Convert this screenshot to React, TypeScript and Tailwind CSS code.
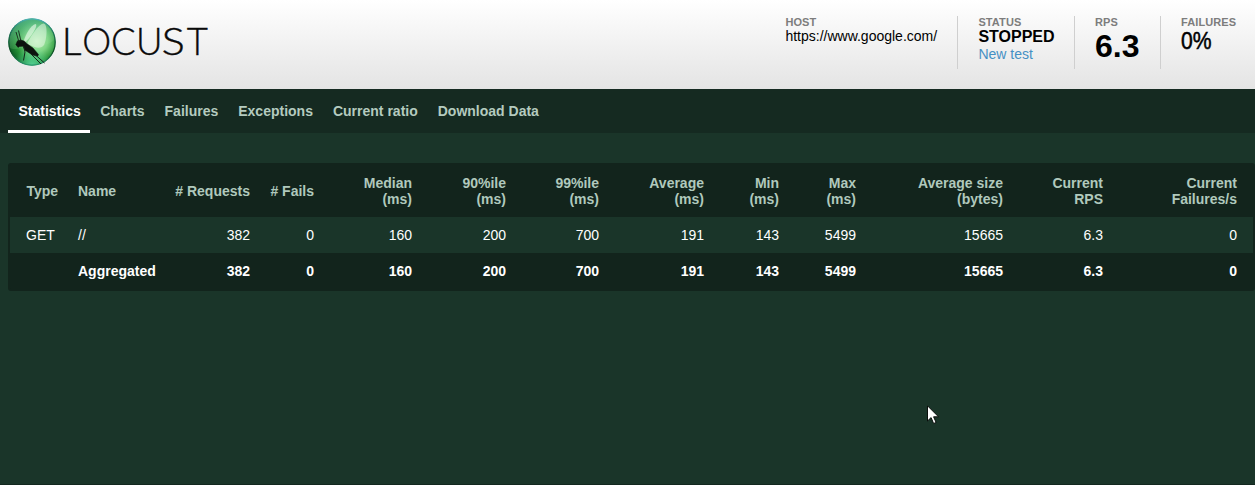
import React from "react";

const tabs = ["Charts", "Failures", "Exceptions", "Current ratio", "Download Data"];

const columns = [
  { lines: ["Type"], width: 58 },
  { lines: ["Name"], width: 97 },
  { lines: ["# Requests"], width: 95 },
  { lines: ["# Fails"], width: 64 },
  { lines: ["Median", "(ms)"], width: 98 },
  { lines: ["90%ile", "(ms)"], width: 94 },
  { lines: ["99%ile", "(ms)"], width: 93 },
  { lines: ["Average", "(ms)"], width: 105 },
  { lines: ["Min", "(ms)"], width: 75 },
  { lines: ["Max", "(ms)"], width: 77 },
  { lines: ["Average size", "(bytes)"], width: 147 },
  { lines: ["Current", "RPS"], width: 100 },
  { lines: ["Current", "Failures/s"], width: 140 },
];

const numbers = ["382", "0", "160", "200", "700", "191", "143", "5499", "15665", "6.3", "0"];

function cellClass(i: number) {
  if (i === 0) return "pl-4 text-left";
  if (i === 1) return "pl-[10px] text-left";
  if (i === columns.length - 1) return "pr-4 text-right";
  return "pr-[10px] text-right";
}

function Logo() {
  return (
    <svg width="212" height="64" viewBox="0 0 212 64" role="img" aria-label="Locust">
      <defs>
        <radialGradient id="orb" cx="0.6" cy="0.48" r="0.58">
          <stop offset="0" stopColor="#b9efb4" />
          <stop offset="0.4" stopColor="#7ed584" />
          <stop offset="0.75" stopColor="#279338" />
          <stop offset="1" stopColor="#0f6426" />
        </radialGradient>
        <linearGradient id="rim" x1="0" y1="0" x2="0" y2="1">
          <stop offset="0" stopColor="#4cb3b5" />
          <stop offset="0.3" stopColor="#1d7358" />
          <stop offset="0.7" stopColor="#0c4a20" />
          <stop offset="1" stopColor="#2a9a70" />
        </linearGradient>
        <radialGradient id="glow" cx="0.5" cy="1" r="0.4">
          <stop offset="0" stopColor="#5fe0a8" stopOpacity="0.85" />
          <stop offset="1" stopColor="#5fe0a8" stopOpacity="0" />
        </radialGradient>
        <linearGradient id="gloss" x1="0" y1="0" x2="0.3" y2="1">
          <stop offset="0" stopColor="#62c9b8" stopOpacity="0.65" />
          <stop offset="1" stopColor="#a5e8a5" stopOpacity="0.12" />
        </linearGradient>
      </defs>
      <circle cx="32" cy="32" r="23.6" fill="url(#orb)" />
      <path d="M9 32C10 18 20 9 32 9c12 0 22 8 23 20-9 10-23 5-31 8-6 2-11 3-14 1z" fill="url(#gloss)" />
      <circle cx="32" cy="32" r="23.4" fill="url(#glow)" />
      <circle cx="32" cy="32" r="23.2" fill="none" stroke="url(#rim)" strokeWidth="1.2" />
      <path d="M23.500 32C25 25 31 15 35.500 14c2.500.2-1 9-10.500 18.500z" fill="#f0fbee" fillOpacity="0.6" />
      <path d="M27 34C31 26 38 14.500 43.500 13.500c4.500.5 3.500 15 .8 21-2.500 4.500-9 3.500-13.300 1z" fill="#f0fbee" fillOpacity="0.5" />
      <path d="M15.800 34.600l1.700-3.800 3.500-.8 3.500 1.200 2.500 2.600 6 4.200 5.500 6.500-.8 1.800-5.200-1.200-7.500-4.900-2-4-3.500.2-1.500 1z" fill="#0c130e" stroke="#0c130e" strokeWidth="0.5" />
      <path d="M19 32L16 22M21 31.500L18.500 20.500" fill="none" stroke="#14251a" strokeWidth="0.9" />
      <path d="M23.500 36l1.500 6-1.500 8.500M30 43l11 11M35 44.500l9.500 8.500" fill="none" stroke="#14251a" strokeWidth="1" />
      <g
        fontFamily="Lato, sans-serif"
        fontSize="36.500"
        fontWeight="300"
        fill="#0a0a0a"
        stroke="#0a0a0a"
        strokeWidth="0.35"
      >
        <text transform="translate(61.800 45) scale(1.07 1)">L</text>
        <text x="82.300 111 136" y="45">OCU</text>
        <text transform="translate(161.500 45) scale(1.2 1)">S</text>
        <text x="186.700" y="45">T</text>
      </g>
    </svg>
  );
}

function Stat({ label, children, className }: { label: string; children: React.ReactNode; className: string }) {
  return (
    <div className={`h-[53px] shrink-0 border-[#cfcfcf] ${className}`}>
      <div className="h-[11px] text-[11px] leading-[13px] font-bold tracking-[0.1px] text-[#7d7d7d]">{label}</div>
      {children}
    </div>
  );
}

export default function App() {
  return (
    <div className="h-[485px] w-[1255px] overflow-hidden border-b border-[#13281f] bg-[#1a3529] font-['Liberation_Sans',Arial,sans-serif] text-sm text-white">
      <header className="flex h-[89px] justify-between bg-linear-to-b from-white to-[#e4e4e4] text-black">
        <div className="pt-[10px]">
          <Logo />
        </div>
        <div className="flex pt-4 whitespace-nowrap">
          <Stat label="HOST" className="w-[172px] pl-[0.4px]">
            <div className="pt-px leading-[16px]">https://www.google.com/</div>
          </Stat>
          <Stat label="STATUS" className="w-[117px] border-l pl-[20.4px]">
            <div className="text-base leading-[19px] font-bold">STOPPED</div>
            <a href="#new" className="block leading-[16px] text-[#4590c4]">New test</a>
          </Stat>
          <Stat label="RPS" className="w-[86px] border-l pl-5">
            <div className="pt-px text-[32px] leading-[37px] font-bold">6.3</div>
          </Stat>
          <Stat label="FAILURES" className="w-[95px] border-l pl-5">
            <div className="origin-left scale-x-[0.88] text-[24px] leading-[27px] [-webkit-text-stroke:0.5px_#000]">0%</div>
          </Stat>
        </div>
      </header>

      <nav className="flex h-[44px] bg-[#152a21] pl-2 leading-[44px] font-bold whitespace-nowrap text-[#b4cbbf]">
        <span className="h-[44px] w-[82px] border-b-3 border-white pl-[10.500px] text-white">Statistics</span>
        <div className="flex gap-5 pl-[10.2px]">
          {tabs.map((t) => (
            <span key={t}>{t}</span>
          ))}
        </div>
      </nav>

      <main className="pt-[30px] pl-2">
        <div className="w-[1247px] overflow-hidden rounded-[3px] border-2 border-[#12241c] bg-[#12241c]">
          <table className="w-[1243px] table-fixed border-collapse">
            <colgroup>
              {columns.map((c, i) => (
                <col key={i} style={{ width: c.width }} />
              ))}
            </colgroup>
            <thead>
              <tr className="h-[52px] leading-[16px] text-[#b0c9bc]">
                {columns.map((c, i) => (
                  <th key={i} className={`p-0 font-bold whitespace-nowrap ${cellClass(i)}`}>
                    {c.lines.map((l) => (
                      <div key={l} className={i === 0 ? "pl-[0.5px]" : ""}>{l}</div>
                    ))}
                  </th>
                ))}
              </tr>
            </thead>
            <tbody>
              <tr className="h-9 bg-[#1a3529] leading-[16px]">
                {["GET", "//", ...numbers].map((v, i) => (
                  <td key={i} className={`py-0 ${cellClass(i)}`}>{v}</td>
                ))}
              </tr>
              <tr className="h-9 leading-[16px] font-bold">
                {["", "Aggregated", ...numbers].map((v, i) => (
                  <td key={i} className={`py-0 ${cellClass(i)}`}>{v}</td>
                ))}
              </tr>
            </tbody>
          </table>
        </div>
      </main>

      <svg className="absolute top-[405px] left-[927px]" width="13" height="20" viewBox="0 0 13 20" aria-hidden="true">
        <path d="M.5.800v15.200l3.600-3.400 2.500 5.900 2.500-1-2.500-5.700h4.900z" fill="#fff" stroke="#0a0f0c" strokeWidth="1" />
      </svg>
    </div>
  );
}
